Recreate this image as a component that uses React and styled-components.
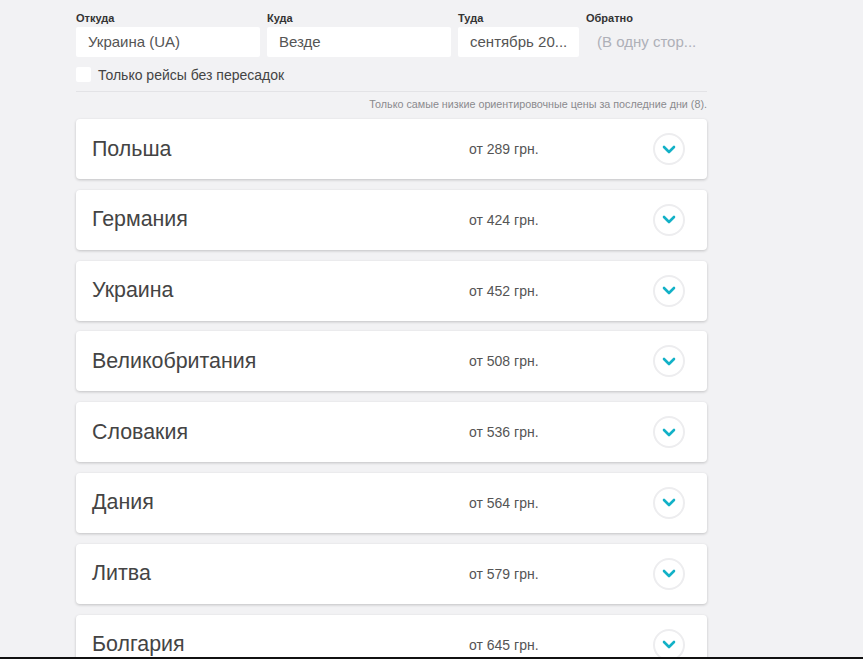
import React from "react";
import styled, { createGlobalStyle } from "styled-components";

const GlobalStyle = createGlobalStyle`
    html, body {
        margin: 0;
        padding: 0;
        background-color: #f2f2f4;
        font-family: "Liberation Sans", Arial, sans-serif;
    }
`;

const PageWrap = styled.div`
    box-sizing: border-box;
    width: 863px;
    height: 659px;
    overflow: hidden;
    padding: 11px 0 0 76px;
    border-bottom: 2px solid #111;
`;

const Column = styled.div`
    width: 631px;
`;

const SearchRow = styled.div`
    display: flex;
    gap: 7px;
`;

const Field = styled.div`
    display: flex;
    flex-direction: column;
    width: ${p => p.$width}px;
`;

const Label = styled.div`
    font-size: 11px;
    font-weight: 700;
    color: #333;
    line-height: 14px;
    margin-bottom: 2px;
`;

const Input = styled.div`
    box-sizing: border-box;
    height: 30px;
    line-height: 30px;
    padding-left: ${p => (p.$plain ? 11 : 12)}px;
    background-color: ${p => (p.$plain ? "transparent" : "#fff")};
    color: ${p => (p.$plain ? "#aeb0b8" : "#555")};
    font-size: 15px;
    border-radius: 2px;
    white-space: nowrap;
    overflow: hidden;
`;

const CheckRow = styled.label`
    display: flex;
    align-items: center;
    gap: 7px;
    margin-top: 9px;
    height: 17px;
    font-size: 14px;
    color: #444;
`;

const Box = styled.span`
    width: 15px;
    height: 15px;
    border-radius: 2px;
    background-color: #fff;
`;

const Divider = styled.div`
    height: 1px;
    background-color: #e3e3e6;
    margin-top: 8px;
`;

const Note = styled.div`
    text-align: right;
    font-size: 10.75px;
    color: #8a8a8e;
    line-height: 12px;
    margin-top: 6px;
`;

const List = styled.div`
    display: flex;
    flex-direction: column;
    gap: 10.8px;
    margin-top: 9px;
`;

const Card = styled.div`
    display: grid;
    grid-template-columns: 377px 1fr auto;
    align-items: center;
    box-sizing: border-box;
    height: 60px;
    padding: 0 22px 0 16px;
    background-color: #fff;
    border-radius: 4px;
    box-shadow: 0 1px 3px rgba(0, 0, 0, 0.2);
`;

const Country = styled.div`
    font-size: 21.4px;
    color: #444;
`;

const Price = styled.div`
    font-size: 14px;
    color: #555;
`;

const Toggle = styled.button`
    box-sizing: border-box;
    width: 32px;
    height: 32px;
    border-radius: 50%;
    border: 2px solid #ededef;
    background: #fff;
    display: flex;
    align-items: center;
    justify-content: center;
    padding: 0;
`;

const Chevron = () => (
    <svg width="14" height="9" viewBox="0 0 14 9">
        <path d="M2 2 L7 7 L12 2" fill="none" stroke="#12b1c7" strokeWidth="2.6" strokeLinecap="round" strokeLinejoin="round"/>
    </svg>
);

const countries = [
    ["Польша", 289],
    ["Германия", 424],
    ["Украина", 452],
    ["Великобритания", 508],
    ["Словакия", 536],
    ["Дания", 564],
    ["Литва", 579],
    ["Болгария", 645],
];

const App = () => {
    return (
        <PageWrap>
            <GlobalStyle/>
            <Column>
                <SearchRow>
                    <Field $width={184}>
                        <Label>Откуда</Label>
                        <Input>Украина (UA)</Input>
                    </Field>
                    <Field $width={184}>
                        <Label>Куда</Label>
                        <Input>Везде</Input>
                    </Field>
                    <Field $width={121}>
                        <Label>Туда</Label>
                        <Input>сентябрь 20...</Input>
                    </Field>
                    <Field $width={115}>
                        <Label>Обратно</Label>
                        <Input $plain>(В одну стор...</Input>
                    </Field>
                </SearchRow>
                <CheckRow>
                    <Box/>
                    Только рейсы без пересадок
                </CheckRow>
                <Divider/>
                <Note>Только самые низкие ориентировочные цены за последние дни (8).</Note>
                <List>
                    {countries.map(([name, price]) => (
                        <Card key={name}>
                            <Country>{name}</Country>
                            <Price>от {price} грн.</Price>
                            <Toggle><Chevron/></Toggle>
                        </Card>
                    ))}
                </List>
            </Column>
        </PageWrap>
    );
};

export default App;
